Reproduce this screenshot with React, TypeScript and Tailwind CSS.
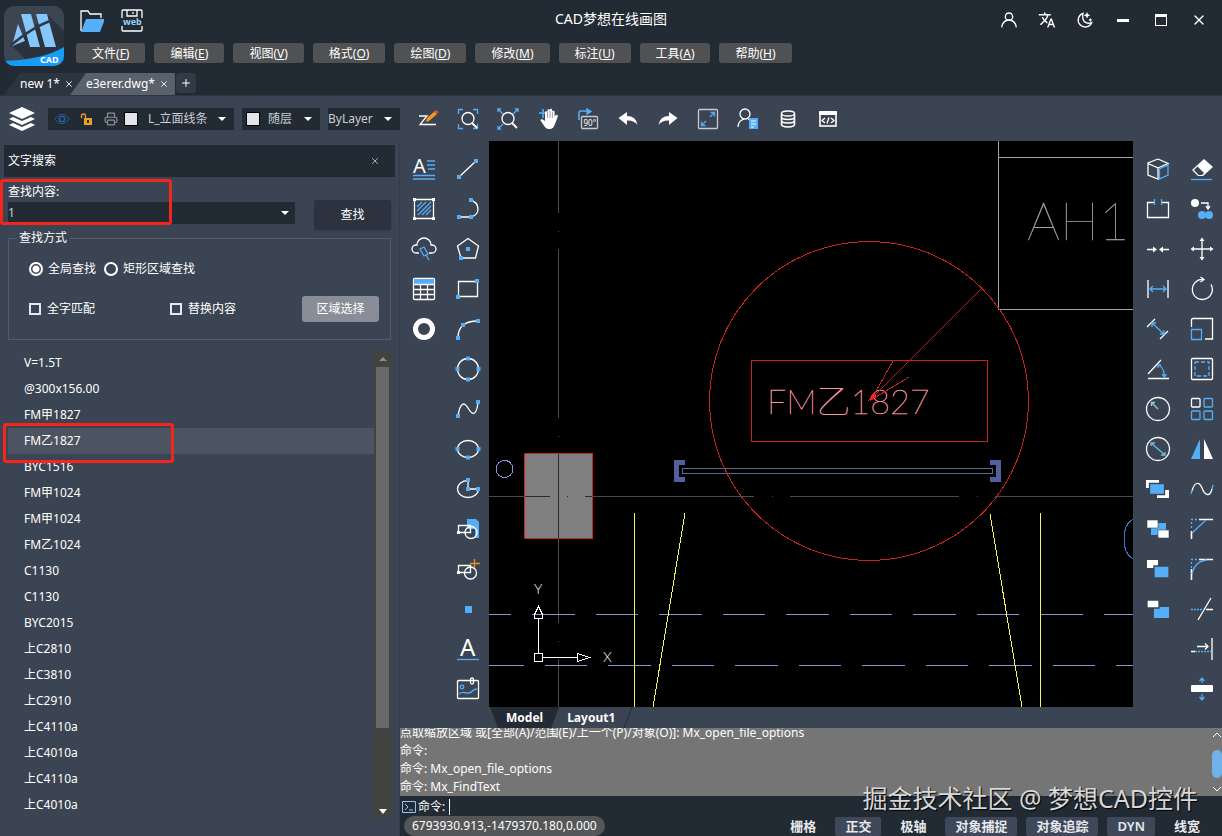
import type { ReactNode } from "react"
import { Printer, X, Plus } from "lucide-react"
import { MdTranslate } from "react-icons/md"

const BLUE = "#55aef8"

function Icon({ children, className = "h-6 w-6" }: { children: ReactNode; className?: string }) {
    return (
        <svg viewBox="0 0 24 24" className={`overflow-visible ${className}`} fill="none" stroke="#fff" strokeWidth="1.3" aria-hidden="true">
            {children}
        </svg>
    )
}

function Dots({ at }: { at: number[][] }) {
    return (
        <>
            {at.map(([x, y]) => (
                <rect key={`${x}-${y}`} x={x - 2} y={y - 2} width="4" height="4" fill={BLUE} stroke="none" />
            ))}
        </>
    )
}

function Caret() {
    return (
        <svg viewBox="0 0 8 4" className="h-1 w-2 shrink-0 pointer-events-none" aria-hidden="true">
            <path d="M0 0h8L4 4z" fill="#fff" />
        </svg>
    )
}

type Tool = { name: string; icon: ReactNode }

const quickTools: Tool[] = [
    {
        name: "绘图",
        icon: (
            <>
                <path d="M3 9h8L4 17.500h16" />
                <path d="M10 15l1-4 8-7 2 3-8 7z" fill="#f59a1c" stroke="none" />
                <path d="M18 5l2-2 2.500 2-2 2.500z" fill="#e2553d" stroke="none" />
            </>
        ),
    },
    {
        name: "窗口缩放",
        icon: (
            <>
                <path d="M2.500 7V2.500H7M17 2.500h4.500V7M21.500 17v4.500H17M7 21.500H2.500V17" stroke={BLUE} />
                <circle cx="12" cy="11.500" r="6" />
                <path d="M16 16l5 5" strokeWidth="1.800" />
            </>
        ),
    },
    {
        name: "范围缩放",
        icon: (
            <>
                <path d="M2 2l5 5M22 2l-5 5M2 22l5-5M2 5V2h3M19 2h3v3M2 19v3h3" stroke={BLUE} />
                <circle cx="12" cy="11.500" r="6" />
                <path d="M16 16l5 5" strokeWidth="1.800" />
            </>
        ),
    },
    {
        name: "平移",
        icon: (
            <>
                <path d="M3 6h8M7 2v9" stroke={BLUE} strokeWidth="1.600" />
                <path
                    d="M9 9.500V5.500a1.200 1.200 0 0 1 2.400 0V3.500a1.200 1.200 0 0 1 2.400 0v-.5a1.200 1.200 0 0 1 2.400 0v2a1.200 1.200 0 0 1 2.400 0v4.500l1.200-1.500a1.300 1.300 0 0 1 2 1.500L19 17c-1 3-2.500 5-5.500 5-4 0-5-2.500-9-8.500 0-2 2-1.500 4.500.500z"
                    fill="#fff"
                    stroke="none"
                />
                <path d="M11.500 5v6M14 4v7M16.400 5v6" stroke="#3b4452" strokeWidth=".500" />
            </>
        ),
    },
    {
        name: "旋转视图",
        icon: (
            <>
                <path d="M3 13V6q0-2 2-2h9" stroke={BLUE} strokeWidth="1.600" />
                <path d="M11 2l4 2.500L11 7z" fill={BLUE} stroke={BLUE} />
                <rect x="5.500" y="9.500" width="16" height="12" rx="1" fill="#3b4452" stroke="#c5cad1" />
                <text x="7.500" y="18.500" fontSize="8" fill="#fff" stroke="none">90°</text>
            </>
        ),
    },
    {
        name: "撤销",
        icon: <path d="M2.500 11L11 5v4q9 0 10.500 9-3.500-5-10.500-4.500V18z" fill="#fff" stroke="none" />,
    },
    {
        name: "重做",
        icon: <path d="M21.500 11L13 5v4q-9 0-10.500 9 3.500-5 10.500-4.500V18z" fill="#fff" stroke="none" />,
    },
    {
        name: "全屏",
        icon: (
            <>
                <rect x="2.500" y="2.500" width="19" height="19" rx="1" stroke="#c5cad1" />
                <path d="M6 18l4-4M14 10l4-4M5.500 14.500v4h4M14.500 5.500h4v4" stroke={BLUE} />
            </>
        ),
    },
    {
        name: "用户",
        icon: (
            <>
                <circle cx="9" cy="7" r="5" />
                <path d="M2 20q0-6 6-8M12 12l3 2" />
                <path d="M13 11h9v11h-9z" fill={BLUE} stroke="none" />
                <path d="M15 14h5M15 17h5M15 20h3" strokeWidth="1" />
            </>
        ),
    },
    {
        name: "图库",
        icon: (
            <>
                <ellipse cx="12" cy="6.500" rx="6.500" ry="2.500" />
                <path d="M5.500 6.500v10.500q0 3 6.500 3t6.500-3V6.500M5.500 10q0 2.500 6.500 2.500t6.500-2.500M5.500 13.500q0 2.500 6.500 2.500t6.500-2.500" strokeWidth="1.600" />
            </>
        ),
    },
    {
        name: "代码",
        icon: (
            <>
                <rect x="4" y="5" width="16" height="14" strokeWidth="1.600" />
                <path d="M3 4h18v4H3z" fill="#fff" stroke="none" />
                <path d="M9 11l-3 2.500L9 16M15 11l3 2.500-3 2.500M13 10.500l-2 6" />
            </>
        ),
    },
]

const annotateTools: Tool[] = [
    {
        name: "多行文字",
        icon: (
            <>
                <text x="1" y="16" fontSize="20" fill="#fff" stroke="none">A</text>
                <path d="M15 4h8M15 8h8M16 12h7M1 18.500h22M1 22h22" stroke={BLUE} />
            </>
        ),
    },
    {
        name: "填充",
        icon: (
            <>
                <path d="M2.500 2.500h19v19h-19z" />
                <path d="M1 1h3v3H1zM20 1h3v3h-3zM1 20h3v3H1zM20 20h3v3h-3z" fill="#fff" stroke="none" />
                <path d="M5 10l5-5M5 14l9-9M6 18L19 5M10 18l9-9M14 18l5-5" stroke={BLUE} />
            </>
        ),
    },
    {
        name: "云线",
        icon: (
            <>
                <path d="M7 16H4a4 4 0 0 1 0-8h1a7 7 0 0 1 14 0h1a4 4 0 0 1 0 8h-3" />
                <path d="M8 12l4-2 4 7-4 2zM14 18l3 5" stroke={BLUE} />
            </>
        ),
    },
    {
        name: "表格",
        icon: (
            <>
                <rect x="1.500" y="1.500" width="21" height="21" rx="1" />
                <path d="M2 2h20v5H2z" fill={BLUE} stroke="none" />
                <path d="M1.500 7.500h21M1.500 12.500h21M1.500 17.500h21M8.500 7.500v15M15.500 7.500v15" />
            </>
        ),
    },
    { name: "圆环", icon: <circle cx="12" cy="12" r="8.500" strokeWidth="5" /> },
]

const drawTools: Tool[] = [
    { name: "直线", icon: <><path d="M3 20L20 4" /><Dots at={[[3, 20], [20, 4]]} /></> },
    { name: "多段线", icon: <><path d="M3 20h12q7-2 7-8 0-7-8-9" /><Dots at={[[3, 20], [15, 20], [15, 3]]} /></> },
    { name: "正多边形", icon: <><path d="M12 1.500L22.500 9l-3 12H5L1.500 9z" /><Dots at={[[12, 12], [5, 21]]} /></> },
    { name: "矩形", icon: <><path d="M2.500 4.500h19v15h-19z" /><Dots at={[[2, 20], [21, 4]]} /></> },
    { name: "圆弧", icon: <><path d="M2 21Q2 4 22 4" /><Dots at={[[2, 21], [7, 8], [22, 4]]} /></> },
    { name: "圆", icon: <><circle cx="12" cy="12" r="10.500" /><Dots at={[[12, 1.5], [1.5, 12], [22.5, 12], [12, 22.5]]} /></> },
    { name: "样条曲线", icon: <><path d="M2 19C4 6 8 4 12 11s8 9 10-5" /><Dots at={[[2, 19], [22, 5]]} /></> },
    { name: "椭圆", icon: <><ellipse cx="12" cy="12" rx="10.500" ry="8.500" /><Dots at={[[1.5, 12], [22.5, 12], [12, 20.5]]} /></> },
    { name: "椭圆弧", icon: <><path d="M12 3.500A10.500 8.500 0 1 0 22.500 12H12V3" /><Dots at={[[12, 3], [12, 12], [22, 12]]} /></> },
    {
        name: "插入块",
        icon: (
            <>
                <path d="M11 2h9l3 3v16h-4v-9h-8z" fill={BLUE} stroke="none" />
                <path d="M2.500 8.500h12v7h-12z" />
                <circle cx="15" cy="15.500" r="6" />
                <rect x="1" y="14" width="3" height="3" fill="#fff" stroke="none" />
            </>
        ),
    },
    {
        name: "创建块",
        icon: (
            <>
                <path d="M2.500 8.500h12v7h-12z" />
                <circle cx="14.500" cy="16" r="6" />
                <rect x="1" y="14" width="3" height="3" fill="#fff" stroke="none" />
                <path d="M18.500 2v9M14 6.500h10" stroke="#e8941c" />
            </>
        ),
    },
    { name: "点", icon: <rect x="9" y="9" width="7" height="7" fill={BLUE} stroke="none" /> },
    {
        name: "单行文字",
        icon: (
            <>
                <text x="4" y="19" fontSize="24" fill="#fff" stroke="none">A</text>
                <path d="M1 22.500h22" stroke={BLUE} />
            </>
        ),
    },
    {
        name: "图片",
        icon: (
            <>
                <rect x="1.500" y="3.500" width="21" height="18" rx="1" />
                <rect x="14.500" y="1" width="3" height="6" rx="1.500" />
                <circle cx="6" cy="10" r="1.800" stroke={BLUE} />
                <path d="M3 17c4-4 6 0 10-1s3-4 8-4" stroke={BLUE} />
            </>
        ),
    },
]

const arrangeTools: Tool[] = [
    {
        name: "三维",
        icon: (
            <>
                <path d="M12 2L2 6v12l10 4V11L2 6.500M12 2l10 4.500-10 4.500M12 11v11" />
                <path d="M13.500 12L22 8v10l-8.500 4z" stroke={BLUE} />
            </>
        ),
    },
    {
        name: "打断",
        icon: (
            <>
                <path d="M8 5.500H1.500v15h21v-15H16" />
                <path d="M8.500 2v6M15.500 2v6" stroke={BLUE} />
            </>
        ),
    },
    {
        name: "合并",
        icon: (
            <>
                <path d="M1 12.500h8M23 12.500h-8" />
                <path d="M7 9.500l4 3-4 3zM17 9.500l-4 3 4 3z" fill="#fff" stroke="none" />
            </>
        ),
    },
    {
        name: "线性标注",
        icon: (
            <>
                <path d="M2 3v18M22 3v18" />
                <path d="M4 12h16M7 9l-3 3 3 3M17 9l3 3-3 3" stroke={BLUE} />
            </>
        ),
    },
    {
        name: "对齐标注",
        icon: (
            <>
                <path d="M1 10l8-8M14 22l8-8" />
                <path d="M6 6l12 11M6 10V6h4M14 17h4v-4" stroke={BLUE} />
            </>
        ),
    },
    {
        name: "角度标注",
        icon: (
            <>
                <path d="M2 17L15 3M2 21.500h21" />
                <path d="M12 8q6 2 6.500 11M12 11V8h3M16 17l2.500 3 2-3" stroke={BLUE} />
            </>
        ),
    },
    {
        name: "半径标注",
        icon: (
            <>
                <circle cx="12" cy="12" r="11.500" />
                <path d="M12 12L6 6M5.500 9V5.500H9" stroke="#8fd0c8" />
            </>
        ),
    },
    {
        name: "直径标注",
        icon: (
            <>
                <circle cx="12" cy="12" r="11.500" />
                <path d="M5 6l14 12M5 9V6h4M15 18h4v-3" stroke="#6cc0d8" />
            </>
        ),
    },
    { name: "前置", icon: <><path d="M0 3h13v8H0zM11 13h12v8H11z" fill="#fff" stroke="none" /><path d="M3.500 6.500h15v11h-15z" fill={BLUE} stroke="#3b4452" /></> },
    { name: "后置", icon: <><path d="M5 6h15v12H5z" fill={BLUE} stroke="none" /><path d="M1 3h11v8H1zM12 13h11v8H12z" fill="#fff" stroke="#3b4452" strokeWidth=".600" /></> },
    { name: "置于对象之上", icon: <><path d="M1 3h11v8H1z" fill="#fff" stroke="none" /><path d="M8 9h15v12H8z" fill={BLUE} stroke="#3b4452" /></> },
    { name: "置于对象之下", icon: <><path d="M8 10h15v11H8z" fill={BLUE} stroke="none" /><path d="M1 3h12v8H1z" fill="#fff" stroke="#3b4452" /></> },
]

const modifyTools: Tool[] = [
    {
        name: "删除",
        icon: (
            <>
                <path d="M14 2L23 10l-10 9H8l-6-6z" fill="#fff" stroke="none" />
                <path d="M7.500 9.500l6.500 6.500-2 2H8.500L4 13z" fill="#3b4452" stroke="none" />
                <path d="M1 22.500h21" stroke={BLUE} />
            </>
        ),
    },
    {
        name: "复制",
        icon: (
            <>
                <circle cx="5" cy="6" r="4" fill="#fff" stroke="none" />
                <circle cx="12" cy="18" r="4" fill={BLUE} stroke="none" />
                <circle cx="19" cy="18" r="4" fill={BLUE} stroke="none" />
                <path d="M11 6h7v5M16 9l2 3 2-3" />
            </>
        ),
    },
    {
        name: "移动",
        icon: (
            <>
                <path d="M12 2v20M2 12h20" />
                <path d="M9.500 4L12 .500 14.500 4zM9.500 20l2.500 3.500 2.500-3.500zM4 9.500L.500 12 4 14.500zM20 9.500l3.500 2.500-3.500 2.500z" fill="#fff" stroke="none" />
            </>
        ),
    },
    { name: "旋转", icon: <path d="M13 2.500A10 10 0 1 0 21 7.500M10.500 0l3.500 2.500-3.500 2.500" /> },
    {
        name: "缩放",
        icon: (
            <>
                <path d="M1.500 10V3q0-1.500 1.500-1.500h19.500V22H15" />
                <path d="M1.500 12.500h10v10h-10z" stroke={BLUE} />
            </>
        ),
    },
    {
        name: "拉伸",
        icon: (
            <>
                <rect x="1.500" y="1.500" width="21" height="21" rx="1" />
                <path d="M5 5h14v14H5z" stroke={BLUE} strokeDasharray="4 2" />
            </>
        ),
    },
    {
        name: "阵列",
        icon: (
            <>
                <rect x="1.500" y="1.500" width="8.500" height="8.500" rx="1" />
                <g stroke={BLUE}>
                    <rect x="14" y="1.500" width="8.500" height="8.500" rx="1" />
                    <rect x="1.500" y="14" width="8.500" height="8.500" rx="1" />
                    <rect x="14" y="14" width="8.500" height="8.500" rx="1" />
                </g>
            </>
        ),
    },
    { name: "镜像", icon: <><path d="M10 2v20H1z" fill={BLUE} stroke="none" /><path d="M14 2v20h9z" fill="#fff" stroke="none" /></> },
    {
        name: "曲线",
        icon: (
            <>
                <path d="M2 14C4 6 9 3 12 11s8 9 10 1" />
                <path d="M1 17l1-4M22 12l1-4" stroke={BLUE} />
            </>
        ),
    },
    {
        name: "倒角",
        icon: (
            <>
                <path d="M1.500 14v8M9 2.500h14" strokeWidth="1.600" />
                <path d="M1.500 11V2.500H8" stroke={BLUE} strokeDasharray="2 2" />
                <path d="M2 16L16 3" stroke={BLUE} />
            </>
        ),
    },
    {
        name: "圆角",
        icon: (
            <>
                <path d="M1.500 12v11M9 2.500h14" strokeWidth="1.600" />
                <path d="M1.500 11V2.500H8" stroke={BLUE} strokeDasharray="2 2" />
                <path d="M2 17Q5 4 17 3" stroke={BLUE} />
            </>
        ),
    },
    { name: "修剪", icon: <><path d="M8 23L21 1M16 12.500h7" /><path d="M1 12.500h13" stroke={BLUE} strokeDasharray="2 1" /></> },
    { name: "延伸", icon: <><path d="M22 1v22M7 9.500h11M15 6.500l3 3-3 3M1 14.500h4" /><path d="M5 14.500h16" stroke={BLUE} strokeDasharray="2 1" /></> },
    {
        name: "偏移",
        icon: (
            <>
                <rect x="1" y="8" width="22" height="7" rx="1" fill="#fff" stroke="none" />
                <path d="M12 6V1M9.500 4L12 1l2.500 3M12 17v5M9.500 20l2.500 3 2.500-3" stroke={BLUE} />
            </>
        ),
    },
]

const menus = [
    ["文件", "F"], ["编辑", "E"], ["视图", "V"], ["格式", "O"], ["绘图", "D"],
    ["修改", "M"], ["标注", "U"], ["工具", "A"], ["帮助", "H"],
]

const results = [
    "V=1.5T", "@300x156.00", "FM甲1827", "FM乙1827", "BYC1516", "FM甲1024",
    "FM甲1024", "FM乙1024", "C1130", "C1130", "BYC2015", "上C2810", "上C3810",
    "上C2910", "上C4110a", "上C4010a", "上C4110a", "上C4010a",
]

const statusItems = [
    { label: "栅格", on: false },
    { label: "正交", on: true },
    { label: "极轴", on: false },
    { label: "对象捕捉", on: true },
    { label: "对象追踪", on: true },
    { label: "DYN", on: true },
    { label: "线宽", on: false },
]

function ToolColumn({ tools }: { tools: Tool[] }) {
    return (
        <div className="flex flex-col gap-4">
            {tools.map((t) => (
                <button key={t.name} aria-label={t.name} className="h-6 w-6">
                    <Icon>{t.icon}</Icon>
                </button>
            ))}
        </div>
    )
}

function Logo() {
    return (
        <svg viewBox="0 0 60 60" className="h-15 w-15" aria-hidden="true">
            <clipPath id="logo-clip">
                <rect width="60" height="60" rx="10" />
            </clipPath>
            <g clipPath="url(#logo-clip)">
                <rect width="60" height="60" fill="#3c4552" />
                <path d="M43 8l17 17v35H28L9 41z" fill="#2a323e" />
                <path d="M17 8h10l9 33H26zM32 8h11l9 33H41zM14 18l7 17-13 5z" fill="#85c6fb" />
                <path d="M6 40q24-20 43-26" stroke="#2f3844" strokeWidth="2.500" fill="none" />
                <path d="M0 55q38-1 60-14v19H0z" fill="#169bf7" />
            </g>
            <text x="36" y="57" fontSize="9" fontWeight="700" fill="#fff">CAD</text>
        </svg>
    )
}

function Header() {
    return (
        <header className="bg-[#222a33]">
            <div className="grid grid-cols-[76px_1fr_auto_1fr_76px] grid-rows-[40px_33px]">
                <div className="row-span-2 pl-1 pt-1.5">
                    <Logo />
                </div>
                <div className="flex items-center gap-4">
                    <button aria-label="打开" className="w-7">
                        <svg viewBox="0 0 28 24" className="h-6 w-7" fill="none" aria-hidden="true">
                            <path d="M5 23V3h7l2 3h11v4" stroke="#fff" strokeWidth="1.300" />
                            <path d="M10 11h19l-5 13H5z" fill={BLUE} />
                        </svg>
                    </button>
                    <button aria-label="保存" className="w-6">
                        <Icon>
                            <rect x="2" y="2" width="20" height="21" rx="1" />
                            <path d="M7 2v6h10V2M13 4v2" />
                            <rect x="1" y="10" width="22" height="8" fill="#222a33" stroke="none" />
                            <text x="3" y="17" fontSize="9" fontWeight="700" fill="#9bd0fb" stroke="none">web</text>
                        </Icon>
                    </button>
                </div>
                <h1 className="self-center pb-0.5 text-[14px] leading-5">CAD梦想在线画图</h1>
                <div className="col-span-2 flex items-center justify-end pr-1">
                    <button aria-label="账户" className="flex w-[38px] justify-center">
                        <Icon className="h-4 w-4">
                            <g strokeWidth="2"><circle cx="12" cy="7" r="5.500" /><path d="M1 23q2-11 11-11t11 11" /></g>
                        </Icon>
                    </button>
                    <button aria-label="语言" className="flex w-[38px] justify-center"><MdTranslate className="h-[18px] w-[18px]" /></button>
                    <button aria-label="深色模式" className="flex w-[38px] justify-center">
                        <Icon className="h-4 w-4">
                            <path d="M9 2a10.500 10.500 0 1 0 13 14Q12 19 9 11q-1-5 0-9z" strokeWidth="2" />
                            <path d="M15 0l1.500 3.500L20 5l-3.500 1.500L15 10l-1.500-3.500L10 5l3.500-1.500zM20 9l1 2 2 1-2 1-1 2-1-2-2-1 2-1z" fill="#fff" stroke="none" />
                        </Icon>
                    </button>
                    <button aria-label="最小化" className="flex w-[38px] justify-center"><span className="h-[3px] w-3 bg-white" /></button>
                    <button aria-label="最大化" className="flex w-[38px] justify-center"><span className="h-3 w-3 border border-t-[3px] border-white" /></button>
                    <button aria-label="关闭" className="flex w-[38px] justify-center"><X className="h-4 w-4" /></button>
                </div>
                <nav className="col-span-4 flex items-start gap-[9px] pt-[3px]">
                    {menus.map(([label, key]) => (
                        <button key={key} className="h-5 rounded-[3px] bg-[#505152] px-4 text-[12px] leading-[22px]">
                            {label}(<u>{key}</u>)
                        </button>
                    ))}
                </nav>
            </div>
            <div className="flex h-[22px] items-stretch pl-1 text-[12px] leading-5">
                <div className="flex items-center gap-1 bg-[#2c343f] pl-4 pr-3 [clip-path:polygon(16px_0,100%_0,100%_100%,0_100%)]">
                    <a href="#new">new 1*</a>
                    <button aria-label="关闭 new 1"><X className="h-2.5 w-2.5" /></button>
                </div>
                <div className="-ml-4 mr-px flex items-center gap-1 bg-[#59616d] pl-4 pr-1.5 [clip-path:polygon(16px_0,100%_0,100%_100%,0_100%)]">
                    <a href="#e3erer">e3erer.dwg*</a>
                    <button aria-label="关闭 e3erer.dwg"><X className="h-2.5 w-2.5" /></button>
                </div>
                <button aria-label="新建标签" className="mb-0.5 flex w-5 items-center justify-center rounded-[3px] bg-[#323a46]">
                    <Plus className="h-3 w-3" />
                </button>
            </div>
        </header>
    )
}

function Toolbar() {
    return (
        <div className="flex h-[46px] items-center border-t border-[#2d3541] bg-[#3b4452] text-[12px] text-[#c9ced6]">
            <button aria-label="图层" className="ml-2 mr-3 text-white">
                <svg viewBox="0 0 28 28" className="h-7 w-7" fill="#fff" aria-hidden="true">
                    <path d="M14 2l13 6-13 6L1 8zM1 14l4-2 9 4 9-4 4 2-13 6zM1 20l4-2 9 4 9-4 4 2-13 6z" />
                </svg>
            </button>
            <div className="mr-2 flex h-[22px] w-[186px] items-center bg-[#222a33] pl-1.5 pr-2">
                <Icon className="mr-2.5 h-4 w-4"><path d="M1 12q11-14 22 0-11 14-22 0z" stroke="#2b63ad" /><circle cx="12" cy="12" r="4" stroke="#2b63ad" strokeWidth="2" /></Icon>
                <svg viewBox="0 0 12 12" className="mr-3 h-3 w-3" fill="none" aria-hidden="true">
                    <path d="M1.500 5V3q0-2 2-2t2 2v2" stroke="#f0a020" strokeWidth="1.300" />
                    <path d="M4 5h8v7H4zM7 7v3h2V7z" fill="#f0a020" fillRule="evenodd" />
                </svg>
                <Printer className="mr-1.5 h-3.5 w-3.5 text-[#8b929c]" />
                <span className="mr-1.5 h-3.5 w-3.5 shrink-0 border border-black bg-[#e1e4ea]" />
                <select aria-label="图层" className="w-20 min-w-0 flex-1 appearance-none bg-transparent pl-1">
                    <option>L_立面线条</option>
                </select>
                <Caret />
            </div>
            <div className="mr-2 flex h-[22px] w-[78px] items-center bg-[#222a33] pl-1 pr-2">
                <span className="mr-2 h-3.5 w-3.5 shrink-0 border border-black bg-[#e1e4ea]" />
                <select aria-label="颜色" className="w-8 min-w-0 flex-1 appearance-none bg-transparent">
                    <option>随层</option>
                </select>
                <Caret />
            </div>
            <div className="flex h-[22px] w-[72px] items-center bg-[#222a33] pr-2">
                <select aria-label="线型" className="w-12 min-w-0 flex-1 appearance-none bg-transparent">
                    <option>ByLayer</option>
                </select>
                <Caret />
            </div>
            <div className="ml-2 flex">
                {quickTools.map((t) => (
                    <button key={t.name} aria-label={t.name} className="flex w-10 justify-center">
                        <Icon>{t.icon}</Icon>
                    </button>
                ))}
            </div>
        </div>
    )
}

function SearchPanel() {
    return (
        <aside className="w-[400px] shrink-0 border-r border-[#333c48] text-[12px] leading-4">
            <div className="mx-1 mt-1 flex h-8 items-center justify-between bg-[#222a33] pl-1 pr-[15px]">
                <h2>文字搜索</h2>
                <button aria-label="关闭面板"><X className="h-2.5 w-2.5" strokeWidth={1.5} /></button>
            </div>
            <div className="relative flex h-[53px] justify-between pl-2 pr-2 pt-[7px]">
                <div className="w-[287px]">
                    <label htmlFor="keyword" className="block">查找内容:</label>
                    <div className="mt-0.5 flex h-[22px] items-center bg-[#222a33] pr-1.5">
                        <input id="keyword" defaultValue="1" className="min-w-0 flex-1 bg-transparent text-[#c9ced6] outline-none" />
                        <Caret />
                    </div>
                </div>
                <button className="mt-4 h-[30px] w-[77px] rounded-[3px] bg-[#2c323e] shadow">查找</button>
                <div className="pointer-events-none absolute left-0 top-0.5 h-[46px] w-[172px] rounded-[3px] border-3 border-[#f4261c]" />
            </div>
            <fieldset className="mx-2 h-[110px] border border-[#535c69] pl-5 pr-[11px]">
                <legend className="-ml-3 px-0.5">查找方式</legend>
                <div className="mt-[15px] flex items-center gap-2">
                    <label className="flex items-center gap-[5px]">
                        <input type="radio" name="scope" defaultChecked className="h-3.5 w-3.5 appearance-none rounded-full border-2 border-white bg-[radial-gradient(circle,white_3px,transparent_4px)]" />
                        全局查找
                    </label>
                    <label className="flex items-center gap-[5px]">
                        <input type="radio" name="scope" className="h-3.5 w-3.5 appearance-none rounded-full border-2 border-white" />
                        矩形区域查找
                    </label>
                </div>
                <div className="mt-[19px] flex items-center">
                    <label className="flex w-[141px] items-center gap-1.5">
                        <input type="checkbox" className="h-3 w-3 appearance-none border-2 border-[#e6e9ee]" />
                        全字匹配
                    </label>
                    <label className="flex items-center gap-1.5">
                        <input type="checkbox" className="h-3 w-3 appearance-none border-2 border-[#e6e9ee]" />
                        替换内容
                    </label>
                    <button className="ml-auto h-[26px] w-[77px] rounded-[3px] bg-[#898d97]">区域选择</button>
                </div>
            </fieldset>
            <div className="flex pl-2 pr-2 pt-2.5">
                <ul className="flex-1">
                    {results.map((r, i) => (
                        <li key={i} className={i === 3 ? "relative h-[26px] bg-[#4d5461] pl-4 leading-[26px]" : "h-[26px] pl-4 leading-[26px]"}>
                            {r}
                            {i === 3 && (
                                <span className="pointer-events-none absolute -left-[5px] -top-[5px] h-10 w-[171px] rounded-[3px] border-3 border-[#f4261c]" />
                            )}
                        </li>
                    ))}
                </ul>
                <div className="flex w-[17px] flex-col items-center bg-[#42433f]">
                    <svg viewBox="0 0 8 17" className="h-[17px] w-2" aria-hidden="true"><path d="M0 11l4-4 4 4z" fill="#8c8c8c" /></svg>
                    <div className="h-[361px] w-[13px] bg-[#696969]" />
                    <svg viewBox="0 0 8 17" className="mt-auto h-[17px] w-2" aria-hidden="true"><path d="M0 8h8l-4 5z" fill="#fff" /></svg>
                </div>
            </div>
        </aside>
    )
}

function Drawing() {
    return (
        <svg viewBox="489 141 644 566" preserveAspectRatio="xMinYMin slice" className="absolute inset-0 h-full w-full" fill="none" shapeRendering="crispEdges">
            {/* Column hatch and axes */}
            <path d="M558.500 44v663" stroke="#4a4a4a" strokeDasharray="169 18 1 17" />
            <path d="M380 496.500h760" stroke="#4a4a4a" strokeDasharray="169 18 1 17" />
            <rect x="524.500" y="453.500" width="68" height="85" fill="#808080" stroke="#c4231f" />
            <path d="M558.500 454v84M525 496.500h25M567 496.500h1M585 496.500h7" stroke="#2b2b2b" />
            <circle cx="504.500" cy="469" r="8.500" stroke="#8d92e0" />

            {/* Cabinet */}
            <path d="M998.500 141v168h140M998.500 157.500h140" stroke="#a3a3a3" />
            <text x="1027" y="240" fontFamily="Lato" fontWeight="100" fontSize="52" fill="#a3a3a3" stroke="#a3a3a3" strokeWidth=".3">AH1</text>

            {/* Door line */}
            <path d="M682.500 468.500h310v5h-310z" stroke="#5d6a8c" />
            <path d="M674 460h11v5h-6v12h6v5h-11zM990 460h11v22h-11v-5h6v-12h-6z" fill="#5260a0" />

            <path d="M489 614.500h22M532 614.500h604" stroke="#8494d6" strokeDasharray="43 21 42 21" />
            <path d="M481 665.500h655" stroke="#8494d6" strokeDasharray="43 21 42 21" />
            <path d="M1134 519q-10 4-10 20t10 20" stroke="#3c6fc0" />
            <path d="M634.500 513v194M685 513l-32 194M990 514l32 193M1040.500 513v194" stroke="#f6f65c" />

            {/* Found text with marker */}
            <text x="767" y="414" fontFamily="Lato, 'Noto Sans CJK SC'" fontWeight="100" fontSize="34" fill="#ff9aa0">
                <tspan stroke="#ff9aa0" strokeWidth=".4">FM</tspan>乙<tspan stroke="#ff9aa0" strokeWidth=".4">1827</tspan>
            </text>
            <g stroke="#c4231f">
                <circle cx="869" cy="401" r="159.500" />
                <rect x="751.500" y="360.500" width="236" height="81" />
                <path d="M982 288L871 399M893 361l-22 39 38-23" />
            </g>
            <path d="M868 401l5-8 4 3z" fill="#f22" />

            {/* Coordinate axes */}
            <path d="M534.500 653.500h8v8h-8zM538.500 653v-35M534.500 618.500h8v-4l-4-8-4 8zM543 657.500h34M577.500 653.500l12 4-12 4z" stroke="#fff" />
            <text x="534" y="594" fontFamily="Lato" fontWeight="300" fontSize="14" fill="#fff">Y</text>
            <text x="603" y="662" fontFamily="Lato" fontWeight="300" fontSize="14" fill="#fff">X</text>
        </svg>
    )
}

function CommandArea() {
    return (
        <footer className="relative text-[12px]">
            <div className="flex h-[68px] bg-[#757575]">
                <div className="flex flex-1 flex-col justify-end overflow-hidden leading-[18px]">
                    <p>点取缩放区域 或[全部(A)/范围(E)/上一个(P)/对象(O)]: Mx_open_file_options</p>
                    <p>命令:</p>
                    <p>命令: Mx_open_file_options</p>
                    <p>命令: Mx_FindText</p>
                </div>
                <div className="flex w-2.5 flex-col items-center justify-between">
                    <svg viewBox="0 0 10 12" className="h-3 w-2.5" fill="none" stroke="#fff" aria-hidden="true"><path d="M1 9l4-4 4 4" /></svg>
                    <div className="mt-1 h-7 w-2.5 rounded-full bg-[#6fb3ea]" />
                    <svg viewBox="0 0 10 12" className="h-3 w-2.5" fill="none" stroke="#fff" aria-hidden="true"><path d="M1 3l4 4 4-4" /></svg>
                </div>
            </div>
            <div className="flex h-5 items-center bg-[#222a33] pl-0.5 pt-0.5">
                <svg viewBox="0 0 14 12" className="mr-0.5 h-3 w-3.5" fill="none" stroke="#8cc8f0" aria-hidden="true">
                    <path d="M.5.5h13v11H.5zM3 3l3 3-3 3M7 9h4" />
                </svg>
                <label htmlFor="command">命令:</label>
                <span className="ml-1 h-4 w-px bg-white" />
                <input id="command" className="min-w-0 flex-1 bg-transparent outline-none" />
            </div>
            <div className="flex h-5 items-center justify-between bg-[#222a33] pl-1 pr-3">
                <span className="h-5 rounded-full bg-[#555657] px-2 leading-5">6793930.913,-1479370.180,0.000</span>
                <div className="flex gap-[9px] text-[13px] font-semibold text-[#e6e9ee]">
                    {statusItems.map((s) => (
                        <button key={s.label} className={s.on ? "h-[19px] rounded-xs bg-[#3f4858] px-2.5 leading-[19px]" : "h-[19px] px-2.5 leading-[19px]"}>
                            {s.label}
                        </button>
                    ))}
                </div>
            </div>
            {/* Watermark */}
            <div className="pointer-events-none absolute right-6 top-[52px] text-[25px] leading-9 text-[#d6d8da] [text-shadow:1px_1px_1px_#000]">
                掘金技术社区 @ 梦想CAD控件
            </div>
        </footer>
    )
}

export default function App() {
    return (
        <div className="flex min-h-screen flex-col bg-[#3b4452] font-['Noto_Sans','Noto_Sans_CJK_SC',sans-serif] text-white">
            <Header />
            <Toolbar />
            <main className="flex flex-1">
                <SearchPanel />
                <div className="flex min-w-0 flex-1 flex-col">
                    <div className="flex flex-1">
                        <div className="flex gap-5 pb-1.5 pl-3 pr-[9px] pt-4">
                            <ToolColumn tools={annotateTools} />
                            <ToolColumn tools={drawTools} />
                        </div>
                        <div className="relative min-w-0 flex-1 overflow-hidden bg-black">
                            <Drawing />
                        </div>
                        <div className="flex gap-5 pb-1.5 pl-[13px] pr-2 pt-4">
                            <ToolColumn tools={arrangeTools} />
                            <ToolColumn tools={modifyTools} />
                        </div>
                    </div>
                    <div className="flex h-[21px] pl-[90px] text-[12px] font-bold leading-[21px]">
                        <button className="bg-[#222a33] px-4 [clip-path:polygon(0_0,100%_0,calc(100%_-_8px)_100%,8px_100%)]">Model</button>
                        <button className="px-2">Layout1</button>
                        <svg viewBox="0 0 10 21" className="h-[21px] w-2.5" aria-hidden="true"><path d="M9 0L1 21" stroke="#222a33" /></svg>
                    </div>
                    <CommandArea />
                </div>
            </main>
        </div>
    )
}
